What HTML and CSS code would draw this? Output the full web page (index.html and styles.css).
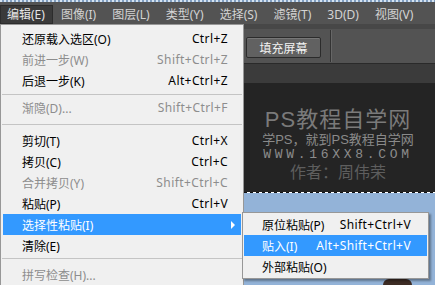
FILE: index.html
```html
<!DOCTYPE html>
<html lang="zh-CN">
<head>
    <meta charset="UTF-8">
    <meta name="viewport" content="width=device-width, initial-scale=1.0">
    <title>编辑菜单</title>
    <link rel="stylesheet" href="styles.css">
</head>
<body>

<div class="app">
    <div class="title-strip"></div>

    <div class="menubar">
        <span class="menubar-item active">编辑(E)</span>
        <span class="menubar-item">图像(I)</span>
        <span class="menubar-item">图层(L)</span>
        <span class="menubar-item">类型(Y)</span>
        <span class="menubar-item">选择(S)</span>
        <span class="menubar-item">滤镜(T)</span>
        <span class="menubar-item">3D(D)</span>
        <span class="menubar-item">视图(V)</span>
    </div>

    <div class="options-bar">
        <button class="opt-button">填充屏幕</button>
        <span class="opt-divider"></span>
    </div>

    <div class="tab-strip"></div>

    <div class="workspace">
        <div class="gutter"></div>
        <div class="document">
            <div class="doc-header">
                <div class="doc-title">PS教程自学网</div>
                <div class="doc-sub">学PS，就到PS教程自学网</div>
                <div class="doc-url">WWW.16XX8.COM</div>
                <div class="doc-author">作者：周伟荣</div>
            </div>
            <div class="marching-ants"></div>
            <div class="photo">
                <div class="photo-hair"></div>
            </div>
        </div>
    </div>
</div>

<div class="menu edit-menu">
    <div class="menu-item"><span>还原载入选区(O)</span><span class="key">Ctrl+Z</span></div>
    <div class="menu-item disabled"><span>前进一步(W)</span><span class="key">Shift+Ctrl+Z</span></div>
    <div class="menu-item"><span>后退一步(K)</span><span class="key">Alt+Ctrl+Z</span></div>
    <div class="menu-sep sep-a"></div>
    <div class="menu-item disabled"><span>渐隐(D)...</span><span class="key">Shift+Ctrl+F</span></div>
    <div class="menu-sep sep-b"></div>
    <div class="menu-item"><span>剪切(T)</span><span class="key">Ctrl+X</span></div>
    <div class="menu-item"><span>拷贝(C)</span><span class="key">Ctrl+C</span></div>
    <div class="menu-item disabled"><span>合并拷贝(Y)</span><span class="key">Shift+Ctrl+C</span></div>
    <div class="menu-item"><span>粘贴(P)</span><span class="key">Ctrl+V</span></div>
    <div class="menu-item selected"><span>选择性粘贴(I)</span><span class="arrow"></span></div>
    <div class="menu-item"><span>清除(E)</span></div>
    <div class="menu-sep sep-c"></div>
    <div class="menu-item disabled"><span>拼写检查(H)...</span></div>
</div>

<div class="menu sub-menu">
    <div class="menu-item"><span>原位粘贴(P)</span><span class="key">Shift+Ctrl+V</span></div>
    <div class="menu-item selected"><span>贴入(I)</span><span class="key">Alt+Shift+Ctrl+V</span></div>
    <div class="menu-item"><span>外部粘贴(O)</span></div>
</div>

</body>
</html>
```

FILE: styles.css
```css
body {
    margin: 0;
    padding: 0;
    width: 435px;
    height: 285px;
    overflow: hidden;
    position: relative;
    background-color: #262626;
    font-family: "Noto Sans", "Noto Sans CJK SC", sans-serif;
    font-size: 12px;
}

.app {
    display: flex;
    flex-direction: column;
    height: 285px;
}

.title-strip {
    height: 2px;
    background: repeating-linear-gradient(90deg, #d6e4f2 0 2px, #7f9dbf 2px 4px);
}

/* menu bar */
.menubar {
    display: flex;
    height: 22px;
    background-color: #535353;
}

.menubar-item {
    margin-top: 3px;
    padding: 0 8px;
    height: 19px;
    line-height: 19px;
    color: #d4d4d4;
    white-space: nowrap;
}

.menubar-item:first-child {
    padding-left: 7px;
}

.menubar-item.active {
    background-color: #3a3a3a;
    box-shadow: inset 0 0 0 1px #2c2c2c;
    color: #e6e6e6;
}

/* options bar */
.options-bar {
    display: flex;
    align-items: center;
    height: 34px;
    padding-left: 246px;
    border-top: 5px solid #474747;
    border-bottom: 1px solid #2a2a2a;
    background-color: #535353;
}

.opt-button {
    width: 75px;
    height: 21px;
    margin-top: 3px;
    padding: 0;
    background-color: #616161;
    border: 1px solid #2b2b2b;
    border-radius: 2px;
    box-shadow: inset 0 1px 0 #777;
    color: #f2f2f2;
    font-family: "Noto Sans CJK SC", sans-serif;
    font-size: 12px;
    line-height: 19px;
}

.opt-divider {
    width: 1px;
    height: 32px;
    margin-left: 9px;
    background-color: #333;
    border-right: 1px solid #666;
}

.tab-strip {
    height: 19px;
    background-color: #3b3b3b;
}

/* canvas */
.workspace {
    flex: 1;
    display: flex;
}

.gutter {
    width: 241px;
}

.document {
    flex: 1;
    display: flex;
    flex-direction: column;
}

.doc-header {
    display: flex;
    flex-direction: column;
    align-items: center;
    padding-top: 24px;
    height: 85px;
    background-color: #242424;
    font-family: "Liberation Sans", "Noto Sans CJK SC", sans-serif;
}

.doc-title {
    font-size: 22px;
    line-height: 26px;
    height: 26px;
    letter-spacing: 1px;
    color: #7a7a7a;
}

.doc-sub {
    font-size: 13px;
    line-height: 14px;
    height: 14px;
    color: #8a8a8a;
}

.doc-url {
    font-family: "Liberation Mono", monospace;
    font-size: 13px;
    line-height: 15px;
    height: 15px;
    letter-spacing: 3.7px;
    color: #8c8c8c;
}

.doc-author {
    font-size: 16px;
    line-height: 22px;
    height: 22px;
    color: #5e5e5e;
}

.marching-ants {
    height: 1px;
    background: repeating-linear-gradient(90deg, #fff 0 3px, #111 3px 6px);
}

.photo {
    flex: 1;
    position: relative;
    background-color: #93b3d8;
}

.photo-hair {
    position: absolute;
    left: 142px;
    bottom: 0;
    width: 29px;
    height: 6px;
    border-radius: 10px 10px 0 0;
    background-color: #3d2c24;
}

/* dropdown menus */
.menu {
    position: absolute;
    background-color: #f0f0f0;
    border: 1px solid #979797;
    color: #000;
}

.edit-menu {
    left: 0;
    top: 24px;
    width: 238px;
    padding: 3px 2px 0;
    border-bottom: none;
}

.sub-menu {
    left: 242px;
    top: 212px;
    width: 183px;
    padding: 1px;
    box-shadow: 2px 2px 2px rgba(0, 0, 0, 0.35);
}

.menu-item {
    display: flex;
    justify-content: space-between;
    align-items: center;
    height: 21px;
    padding: 0 13px 0 19px;
    white-space: nowrap;
}

.sub-menu .menu-item {
    padding: 0 16px 0 18px;
}

.menu-item.disabled {
    color: #8d8d8d;
}

.menu-item.selected {
    background-color: #3399ff;
    color: #fff;
}

.key {
    letter-spacing: 0.4px;
}

.arrow {
    width: 0;
    height: 0;
    margin-right: -7px;
    border-top: 4px solid transparent;
    border-bottom: 4px solid transparent;
    border-left: 4px solid #fff;
}

.menu-sep {
    border-top: 1px solid #c4c4c4;
    margin: 0 -1px;
}

.sep-a {
    margin-top: 3px;
    margin-bottom: 2px;
}

.sep-b {
    margin-top: 6px;
    margin-bottom: 5px;
}

.sep-c {
    margin-top: 2px;
    margin-bottom: 5px;
}
```
